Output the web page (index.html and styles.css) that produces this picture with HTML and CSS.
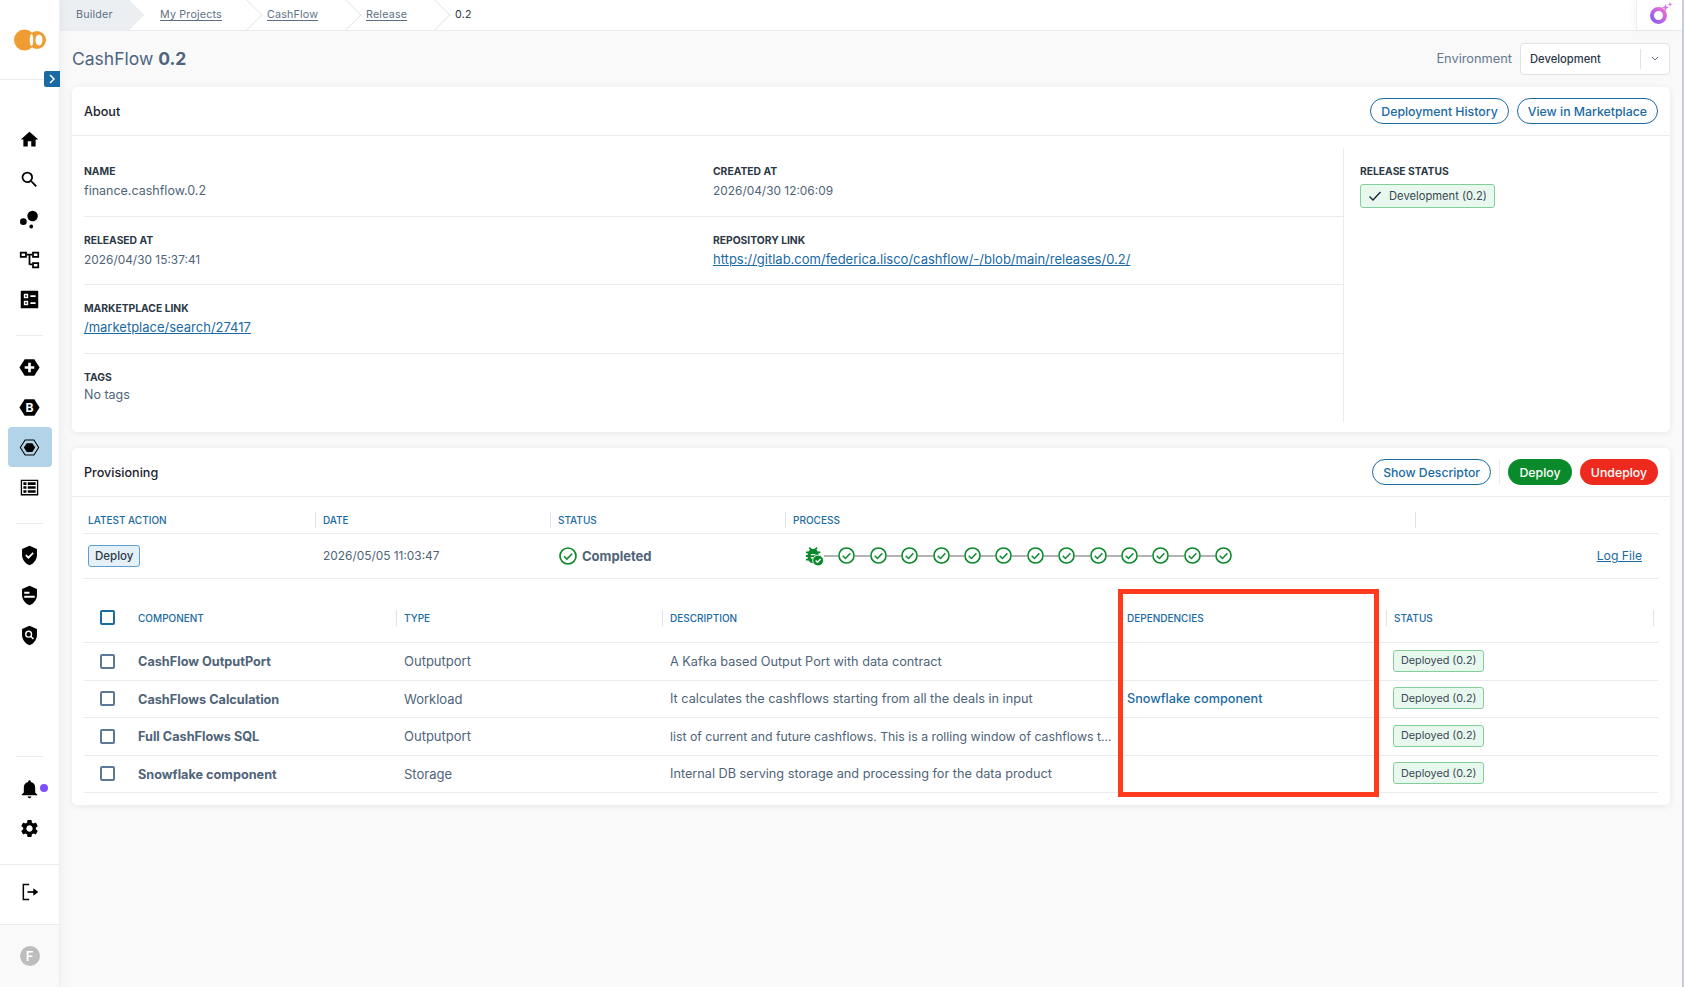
FILE: index.html
```html
<!DOCTYPE html>
<html lang="en">
<head>
    <meta charset="UTF-8">
    <meta name="viewport" content="width=device-width, initial-scale=1.0">
    <title>CashFlow 0.2</title>
    <link rel="stylesheet" href="styles.css">
</head>
<body>
    <svg class="sprites" width="0" height="0">
        <symbol id="check-circle" viewBox="0 0 18 18">
            <circle cx="9" cy="9" r="8" fill="#fff" stroke="#0a8a2a" stroke-width="1.7"/>
            <path d="M5 9.2l2.9 2.9 5.200-5.400" fill="none" stroke="#0a8a2a" stroke-width="1.6"/>
        </symbol>
    </svg>

    <aside class="sidebar">
        <div class="logo">
            <svg width="34" height="24" viewBox="0 0 34 24">
                <circle cx="11.5" cy="12" r="10.5" fill="#ef9d32"/>
                <circle cx="24" cy="12" r="9" fill="#ef9d32"/>
                <ellipse cx="26" cy="12" rx="3.5" ry="5.5" fill="#fff"/>
                <ellipse cx="18.5" cy="12" rx="1.8" ry="6" fill="#fff"/>
            </svg>
        </div>
        <button class="expand-tab">
            <svg width="8" height="12" viewBox="0 0 8 12"><path d="M2 2l4 4-4 4" fill="none" stroke="#fff" stroke-width="1.5"/></svg>
        </button>

        <nav class="nav-group first">
            <a class="nav-item"><svg viewBox="0 0 24 24"><path d="M10 20v-6h4v6h5v-8h3L12 3 2 12h3v8z"/></svg></a>
            <a class="nav-item"><svg viewBox="0 0 24 24"><path d="M15.500 14h-.79l-.28-.27A6.470 6.470 0 0 0 16 9.500 6.500 6.500 0 1 0 9.500 16c1.610 0 3.090-.59 4.230-1.570l.27.28v.79l5 4.990L20.490 19l-4.990-5zm-6 0C7.010 14 5 11.990 5 9.500S7.010 5 9.500 5 14 7.010 14 9.500 11.990 14 9.500 14z"/></svg></a>
            <a class="nav-item"><svg viewBox="0 0 24 24"><circle cx="15.5" cy="8" r="6"/><circle cx="5" cy="14.500" r="3.800"/><circle cx="14" cy="20" r="2.200"/></svg></a>
            <a class="nav-item"><svg viewBox="0 0 24 24"><path fill-rule="evenodd" d="M1 3h8v7H1zM3 5v3h4V5zM15 3h8v7h-8zm2 2v3h4V5zM15 15h8v7h-8zm2 2v3h4v-3z"/><path d="M9 5.500h6v2H9zM11 7h2v11h-2zM12 16.500h3v2h-3z"/></svg></a>
            <a class="nav-item"><svg viewBox="0 0 24 24"><path fill-rule="evenodd" d="M3 2h18a1 1 0 0 1 1 1v18a1 1 0 0 1-1 1H3a1 1 0 0 1-1-1V3a1 1 0 0 1 1-1zm2.500 3.500v5h5v-5zm1.600 1.600h1.800v1.800H7.100zM13 7v2h6V7zM5.500 13.500v5h5v-5zm1.600 1.600h1.800v1.800H7.100zM13 15v2h6v-2z"/></svg></a>
        </nav>
        <div class="nav-divider"></div>
        <nav class="nav-group">
            <a class="nav-item"><svg viewBox="0 0 24 24"><path d="M6.500 2.500h11L23.500 12l-6 9.500h-11L.5 12z"/><path d="M10.500 6.500h3v4h4v3h-4v4h-3v-4h-4v-3h4z" fill="#fff"/></svg></a>
            <a class="nav-item"><svg viewBox="0 0 24 24"><path d="M6.500 2.500h11L23.500 12l-6 9.500h-11L.5 12z"/><text x="12" y="17" class="hex-letter">B</text></svg></a>
            <a class="nav-item active"><svg viewBox="0 0 24 24"><path d="M7 3.500h10L22.500 12 17 20.500H7L1.500 12z" fill="none" stroke="#000" stroke-width="1.2"/><path d="M8.800 7h6.400l3.300 5-3.300 5H8.800l-3.300-5z"/></svg></a>
            <a class="nav-item"><svg viewBox="0 0 24 24"><path fill-rule="evenodd" d="M2 3h20v18H2zm1.500 1.500v15h17v-15z"/><path d="M5 6h3.500v3H5zM10 6h9v3h-9zM5 10.500h3.500v3H5zM10 10.500h9v3h-9zM5 15h3.500v3H5zM10 15h9v3h-9z"/></svg></a>
        </nav>
        <div class="nav-divider"></div>
        <nav class="nav-group">
            <a class="nav-item"><svg viewBox="0 0 24 24"><path d="M12 .8L3.500 4.500v7c0 5.200 3.600 10 8.500 11.700 4.900-1.700 8.500-6.500 8.500-11.700v-7z"/><path d="M7.800 11.500l3 3 5.400-5.400" fill="none" stroke="#fff" stroke-width="2"/></svg></a>
            <a class="nav-item"><svg viewBox="0 0 24 24"><path d="M12 .8L3.500 4.500v7c0 5.200 3.600 10 8.500 11.700 4.900-1.700 8.500-6.500 8.500-11.700v-7z"/><path d="M6 7.800h6v2.200H6zM6 12.300h12v2.200H6z" fill="#fff"/></svg></a>
            <a class="nav-item"><svg viewBox="0 0 24 24"><path d="M12 .8L3.500 4.500v7c0 5.200 3.600 10 8.500 11.700 4.900-1.700 8.500-6.500 8.500-11.700v-7z"/><circle cx="11" cy="10.500" r="3.300" fill="none" stroke="#fff" stroke-width="1.600"/><path d="M13.300 12.800l3.200 3.200" stroke="#fff" stroke-width="1.800"/></svg></a>
        </nav>

        <div class="nav-spacer"></div>

        <div class="nav-divider"></div>
        <nav class="nav-group">
            <a class="nav-item"><svg viewBox="0 0 24 24"><path d="M12 23c1.100 0 2-.9 2-2h-4c0 1.100.89 2 2 2zm6.500-6.500V11c0-3.070-1.640-5.640-5-6.320V4c0-.83-.67-1.500-1.500-1.500s-1.500.67-1.500 1.500v.68c-3.360.68-5 3.240-5 6.320v5.500L3 19v.8h18V19z"/></svg><span class="notify-dot"></span></a>
            <a class="nav-item"><svg viewBox="0 0 24 24"><path d="M19.140 12.940c.04-.3.06-.61.06-.94 0-.32-.02-.64-.07-.94l2.030-1.580c.18-.14.23-.41.12-.61l-1.920-3.320c-.12-.22-.37-.29-.59-.22l-2.390.96c-.5-.38-1.030-.7-1.620-.94l-.36-2.540c-.04-.24-.24-.41-.48-.41h-3.840c-.24 0-.43.17-.47.41l-.36 2.540c-.59.24-1.130.57-1.620.94l-2.390-.96c-.22-.08-.47 0-.59.22L2.740 8.870c-.12.21-.08.47.12.61l2.030 1.580c-.05.3-.09.63-.09.94s.02.64.07.94l-2.030 1.580c-.18.14-.23.41-.12.61l1.920 3.320c.12.22.37.29.59.22l2.390-.96c.5.38 1.030.7 1.620.94l.36 2.540c.05.24.24.41.48.41h3.840c.24 0 .44-.17.47-.41l.36-2.540c.59-.24 1.130-.56 1.620-.94l2.390.96c.22.08.47 0 .59-.22l1.920-3.320c.12-.22.07-.47-.12-.61l-2.010-1.580zM12 15.600c-1.980 0-3.600-1.620-3.600-3.600s1.620-3.600 3.600-3.600 3.600 1.620 3.600 3.600-1.620 3.600-3.600 3.600z"/></svg></a>
        </nav>
        <div class="logout">
            <svg width="20" height="20" viewBox="0 0 24 24"><path d="M11 3H4v18h7" fill="none" stroke="#000" stroke-width="1.800"/><path d="M9 11h9.500v2H9z"/><path d="M16 7.500l6 4.500-6 4.500z"/></svg>
        </div>
        <div class="user-block"><span class="avatar">F</span></div>
    </aside>

    <div class="page">
        <header class="topbar">
            <div class="crumbs">
                <span class="crumb crumb-root">Builder</span>
                <a class="crumb crumb-projects">My Projects</a>
                <a class="crumb crumb-cashflow">CashFlow</a>
                <a class="crumb crumb-release">Release</a>
                <span class="crumb crumb-current">0.2</span>
            </div>
            <div class="assistant">
                <svg width="28" height="28" viewBox="0 0 28 28">
                    <defs><linearGradient id="ai-grad" x1="0" y1="1" x2="1" y2="0"><stop offset="0" stop-color="#8a5cf0"/><stop offset="1" stop-color="#ef6fd0"/></linearGradient></defs>
                    <circle cx="12.5" cy="14.5" r="6.500" fill="none" stroke="url(#ai-grad)" stroke-width="4"/>
                    <path d="M19.500 3l1 2.500 2.500 1-2.500 1-1 2.500-1-2.500-2.500-1 2.500-1zM24 1l.6 1.800 1.800.6-1.800.6-.6 1.800-.6-1.800-1.800-.6 1.800-.6z" fill="#c77be8"/>
                </svg>
            </div>
        </header>

        <main class="content">
            <div class="title-row">
                <h1 class="page-title">CashFlow <b>0.2</b></h1>
                <div class="env-picker">
                    <span class="env-label">Environment</span>
                    <div class="env-select">
                        <span class="env-value">Development</span>
                        <span class="env-caret"><svg width="8" height="5" viewBox="0 0 8 5"><path d="M1 1l3 3 3-3" fill="none" stroke="#6b7a8c" stroke-width="1"/></svg></span>
                    </div>
                </div>
            </div>

            <section class="card about-card">
                <div class="card-header">
                    <h2>About</h2>
                    <div class="card-actions">
                        <button class="btn btn-outline">Deployment History</button>
                        <button class="btn btn-outline">View in Marketplace</button>
                    </div>
                </div>
                <div class="about-body">
                    <div class="about-fields">
                        <div class="field-row">
                            <div class="field"><div class="field-label">NAME</div><div class="field-value">finance.cashflow.0.2</div></div>
                            <div class="field"><div class="field-label">CREATED AT</div><div class="field-value date">2026/04/30 12:06:09</div></div>
                        </div>
                        <div class="field-row">
                            <div class="field"><div class="field-label">RELEASED AT</div><div class="field-value date">2026/04/30 15:37:41</div></div>
                            <div class="field"><div class="field-label">REPOSITORY LINK</div><a class="field-link">https://gitlab.com/federica.lisco/cashflow/-/blob/main/releases/0.2/</a></div>
                        </div>
                        <div class="field-row">
                            <div class="field"><div class="field-label">MARKETPLACE LINK</div><a class="field-link">/marketplace/search/27417</a></div>
                        </div>
                        <div class="field-row last">
                            <div class="field"><div class="field-label">TAGS</div><div class="field-value tight">No tags</div></div>
                        </div>
                    </div>
                    <div class="about-status">
                        <div class="field-label">RELEASE STATUS</div>
                        <div class="badge badge-large">
                            <svg width="14" height="12" viewBox="0 0 14 12"><path d="M1.500 6.500l3.500 3.500 7.500-8" fill="none" stroke="#1d2733" stroke-width="1.400"/></svg>
                            Development (0.2)
                        </div>
                    </div>
                </div>
            </section>

            <section class="card prov-card">
                <div class="card-header">
                    <h2>Provisioning</h2>
                    <div class="card-actions">
                        <button class="btn btn-outline btn-descriptor">Show Descriptor</button>
                        <span class="actions-sep"></span>
                        <button class="btn btn-deploy">Deploy</button>
                        <button class="btn btn-undeploy">Undeploy</button>
                    </div>
                </div>
                <div class="prov-body">
                    <table class="action-table">
                        <colgroup><col class="c-action"><col class="c-date"><col class="c-status"><col class="c-process"><col></colgroup>
                        <thead>
                            <tr>
                                <th class="no-sep"><span>LATEST ACTION</span></th>
                                <th><span>DATE</span></th>
                                <th><span>STATUS</span></th>
                                <th><span>PROCESS</span></th>
                                <th><span>&nbsp;</span></th>
                            </tr>
                        </thead>
                        <tbody>
                            <tr>
                                <td class="cell-action"><span class="action-tag">Deploy</span></td>
                                <td class="cell-date">2026/05/05 11:03:47</td>
                                <td class="cell-status">
                                    <div class="status-done">
                                        <svg width="18" height="18"><use href="#check-circle"/></svg>
                                        <span>Completed</span>
                                    </div>
                                </td>
                                <td class="cell-process">
                                    <div class="process">
                                        <svg class="bug" width="19" height="20" viewBox="3 2 21 22">
                                            <path d="M20 8h-2.810a5.985 5.985 0 0 0-1.820-1.960L17 4.410 15.590 3l-2.170 2.170a6.002 6.002 0 0 0-2.830 0L8.410 3 7 4.410l1.620 1.630C7.880 6.550 7.260 7.220 6.810 8H4v2h2.090c-.05.330-.09.660-.09 1v1H4v2h2v1c0 .340.040.670.09 1H4v2h2.810c1.040 1.790 2.970 3 5.190 3s4.150-1.210 5.190-3H20v-2h-2.090c.05-.330.09-.660.09-1v-1h2v-2h-2v-1c0-.340-.040-.670-.09-1H20V8z" fill="#0a8a2a"/>
                                            <path d="M9.500 11.500h5M9.500 15h3" stroke="#fff" stroke-width="1.600"/>
                                            <circle cx="17.500" cy="18" r="6" fill="#0a8a2a" stroke="#fff" stroke-width="1"/>
                                            <path d="M14.800 18l2 2 3.500-3.700" fill="none" stroke="#fff" stroke-width="1.500"/>
                                        </svg>
                                        <i></i><svg class="step"><use href="#check-circle"/></svg>
                                        <i></i><svg class="step"><use href="#check-circle"/></svg>
                                        <i></i><svg class="step"><use href="#check-circle"/></svg>
                                        <i></i><svg class="step"><use href="#check-circle"/></svg>
                                        <i></i><svg class="step"><use href="#check-circle"/></svg>
                                        <i></i><svg class="step"><use href="#check-circle"/></svg>
                                        <i></i><svg class="step"><use href="#check-circle"/></svg>
                                        <i></i><svg class="step"><use href="#check-circle"/></svg>
                                        <i></i><svg class="step"><use href="#check-circle"/></svg>
                                        <i></i><svg class="step"><use href="#check-circle"/></svg>
                                        <i></i><svg class="step"><use href="#check-circle"/></svg>
                                        <i></i><svg class="step"><use href="#check-circle"/></svg>
                                        <i></i><svg class="step"><use href="#check-circle"/></svg>
                                    </div>
                                </td>
                                <td class="cell-log"><a class="log-link">Log File</a></td>
                            </tr>
                        </tbody>
                    </table>

                    <div class="components">
                        <table class="comp-table">
                            <colgroup><col class="c-check"><col class="c-comp"><col class="c-type"><col class="c-desc"><col class="c-deps"><col></colgroup>
                            <thead>
                                <tr>
                                    <th class="no-sep cell-check"><span class="checkbox head"></span></th>
                                    <th class="no-sep cell-comp"><span>COMPONENT</span></th>
                                    <th><span>TYPE</span></th>
                                    <th><span>DESCRIPTION</span></th>
                                    <th><span>DEPENDENCIES</span></th>
                                    <th class="th-end"><span>STATUS</span></th>
                                </tr>
                            </thead>
                            <tbody>
                                <tr>
                                    <td class="cell-check"><span class="checkbox"></span></td>
                                    <td class="cell-comp"><b>CashFlow OutputPort</b></td>
                                    <td>Outputport</td>
                                    <td class="cell-desc">A Kafka based Output Port with data contract</td>
                                    <td></td>
                                    <td class="cell-state"><span class="badge">Deployed (0.2)</span></td>
                                </tr>
                                <tr>
                                    <td class="cell-check"><span class="checkbox"></span></td>
                                    <td class="cell-comp"><b>CashFlows Calculation</b></td>
                                    <td>Workload</td>
                                    <td class="cell-desc">It calculates the cashflows starting from all the deals in input</td>
                                    <td class="dep-link">Snowflake component</td>
                                    <td class="cell-state"><span class="badge">Deployed (0.2)</span></td>
                                </tr>
                                <tr>
                                    <td class="cell-check"><span class="checkbox"></span></td>
                                    <td class="cell-comp"><b>Full CashFlows SQL</b></td>
                                    <td>Outputport</td>
                                    <td class="cell-desc narrow">list of current and future cashflows. This is a rolling window of cashflows t...</td>
                                    <td></td>
                                    <td class="cell-state"><span class="badge">Deployed (0.2)</span></td>
                                </tr>
                                <tr>
                                    <td class="cell-check"><span class="checkbox"></span></td>
                                    <td class="cell-comp"><b>Snowflake component</b></td>
                                    <td>Storage</td>
                                    <td class="cell-desc">Internal DB serving storage and processing for the data product</td>
                                    <td></td>
                                    <td class="cell-state"><span class="badge">Deployed (0.2)</span></td>
                                </tr>
                            </tbody>
                        </table>
                        <div class="highlight-box"></div>
                    </div>
                </div>
            </section>
        </main>
    </div>
    <div class="scrollbar"></div>
</body>
</html>
```

FILE: styles.css
```css
:root {
    --blue: #1a6aa3;
    --text: #4f6479;
    --label: #2c3846;
    --border: #e9ebee;
    --green: #0a8a2a;
}

* {
    box-sizing: border-box;
    margin: 0;
    padding: 0;
}

body {
    display: flex;
    height: 987px;
    overflow: hidden;
    font-family: 'Inter', 'Open Sans', sans-serif;
    font-size: 13px;
    color: var(--text);
    background: #f9f9fa;
}

.sprites {
    position: absolute;
}

/* Sidebar */
.sidebar {
    position: relative;
    flex: 0 0 60px;
    display: flex;
    flex-direction: column;
    background: #fff;
    border-right: 1px solid #eceef0;
    box-shadow: 2px 0 10px rgba(0, 0, 0, 0.04);
    z-index: 1;
}

.logo {
    height: 80px;
    display: flex;
    align-items: center;
    justify-content: center;
    border-bottom: 1px solid var(--border);
}

.expand-tab {
    position: absolute;
    top: 71px;
    right: -1px;
    width: 16px;
    height: 16px;
    display: flex;
    align-items: center;
    justify-content: center;
    background: var(--blue);
    border: none;
    border-radius: 2px 0 0 2px;
}

.nav-group {
    display: flex;
    flex-direction: column;
    align-items: center;
}

.nav-group.first {
    margin-top: 39px;
}

.nav-item {
    position: relative;
    width: 44px;
    height: 40px;
    display: flex;
    align-items: center;
    justify-content: center;
    border-radius: 4px;
}

.nav-item svg {
    width: 21px;
    height: 21px;
}

.nav-item.active {
    background: #b3d4e8;
}

.hex-letter {
    font-family: 'Inter', sans-serif;
    font-size: 14px;
    font-weight: 700;
    fill: #fff;
    text-anchor: middle;
}

.notify-dot {
    position: absolute;
    top: 16px;
    right: 4px;
    width: 8px;
    height: 8px;
    border-radius: 50%;
    background: #7c4dff;
}

.nav-divider {
    width: 27px;
    height: 1px;
    margin: 16px auto 11px;
    background: var(--border);
}

.nav-spacer {
    flex: 1;
}

.logout {
    height: 60px;
    margin-top: 16px;
    padding-bottom: 5px;
    display: flex;
    align-items: center;
    justify-content: center;
    border-top: 1px solid var(--border);
}

.user-block {
    height: 63px;
    display: flex;
    align-items: center;
    justify-content: center;
    background: #f9f9fa;
    border-top: 1px solid var(--border);
}

.avatar {
    width: 20px;
    height: 20px;
    display: flex;
    align-items: center;
    justify-content: center;
    border-radius: 50%;
    background: #bdbdbd;
    color: #fff;
    font-size: 13px;
    font-weight: 600;
}

/* Top bar */
.page {
    flex: 1;
    min-width: 0;
    display: flex;
    flex-direction: column;
}

.topbar {
    height: 31px;
    display: flex;
    justify-content: space-between;
    background: #fff;
    border-bottom: 1px solid var(--border);
}

.crumbs {
    display: flex;
    height: 30px;
    overflow: hidden;
}

.crumb {
    position: relative;
    display: flex;
    align-items: center;
    padding-bottom: 1px;
    font-size: 10.7px;
    letter-spacing: 0.2px;
    color: #5d7186;
}

a.crumb {
    text-decoration: underline;
    text-underline-offset: 2px;
}

a.crumb::after,
.crumb-root::after {
    content: "";
    position: absolute;
    top: 50%;
    width: 21px;
    height: 21px;
    transform: translateY(-50%) rotate(45deg);
    border-top: 1px solid #e6e8eb;
    border-right: 1px solid #e6e8eb;
    background: #fff;
}

.crumb-root {
    width: 70px;
    padding-left: 16px;
    background: #eceff1;
}

.crumb-root::after {
    right: -10px;
    background: #eceff1;
    border: none;
}

.crumb-projects { margin-left: 30px; width: 107px; }
.crumb-cashflow { width: 99px; }
.crumb-release { width: 89px; }

.crumb-projects::after,
.crumb-cashflow::after,
.crumb-release::after {
    right: 9px;
}

.crumb-current {
    color: #2c3846;
}

.assistant {
    width: 46px;
    height: 30px;
    display: flex;
    align-items: center;
    justify-content: center;
    border-left: 1px solid #eceef0;
    box-shadow: -3px 0 6px rgba(0, 0, 0, 0.03);
}

/* Page content */
.content {
    padding: 0 12px;
}

.title-row {
    height: 56px;
    display: flex;
    align-items: center;
    justify-content: space-between;
    padding-bottom: 1px;
}

.page-title {
    font-size: 17.5px;
    font-weight: 400;
    color: #4d6580;
}

.page-title b {
    font-weight: 700;
}

.env-picker {
    display: flex;
    align-items: center;
    gap: 8px;
}

.env-label {
    font-size: 12.8px;
    color: #64788d;
}

.env-select {
    width: 150px;
    height: 32px;
    display: flex;
    align-items: center;
    justify-content: space-between;
    padding-left: 9px;
    background: #fff;
    border: 1px solid #dfe3e7;
    border-radius: 4px;
}

.env-value {
    font-size: 11.2px;
    font-weight: 500;
    color: #2c3846;
}

.env-caret {
    width: 29px;
    height: 20px;
    display: flex;
    align-items: center;
    justify-content: center;
    border-left: 1px solid #dfe3e7;
}

.card {
    background: #fff;
    border-radius: 5px;
    box-shadow: 0 1px 6px rgba(40, 50, 60, 0.09);
}

.about-card {
    height: 345px;
    margin-bottom: 16px;
}

.prov-card {
    height: 357px;
}

.card-header {
    height: 49px;
    display: flex;
    align-items: center;
    justify-content: space-between;
    padding: 0 12px;
    border-bottom: 1px solid var(--border);
}

.card-header h2 {
    font-size: 12.6px;
    font-weight: 500;
    color: #1a222c;
}

.card-actions {
    display: flex;
    align-items: center;
    gap: 8px;
}

.btn {
    height: 26px;
    padding: 0 10px;
    font-family: inherit;
    font-size: 12.3px;
    font-weight: 500;
    border-radius: 13px;
    border: 1px solid transparent;
    white-space: nowrap;
}

.btn-outline {
    background: #fff;
    border-color: var(--blue);
    color: var(--blue);
}

.btn-descriptor {
    font-size: 12.2px;
}

.btn-deploy {
    width: 64px;
    padding: 0;
    background: var(--green);
    color: #fff;
}

.btn-undeploy {
    width: 78px;
    padding: 0;
    background: #ee2a1e;
    color: #fff;
}

.actions-sep {
    width: 1px;
    height: 24px;
    background: var(--border);
}

/* About */
.about-body {
    display: flex;
    padding: 12px 0 0 12px;
}

.about-fields {
    flex: 0 0 1260px;
    border-right: 1px solid var(--border);
}

.field-row {
    height: 68.5px;
    display: grid;
    grid-template-columns: 629px 1fr;
    padding-top: 15px;
    border-bottom: 1px solid var(--border);
}

.field-row.last {
    border-bottom: none;
}

.field-label {
    font-size: 10.3px;
    font-weight: 700;
    line-height: 16px;
    color: var(--label);
}

.field-value {
    margin-top: 2px;
    font-size: 12.5px;
    line-height: 20px;
    color: var(--text);
}

.field-value.date {
    font-size: 11.9px;
}

.field-value.tight {
    margin-top: 0;
}

.field-link {
    display: inline-block;
    margin-top: 1px;
    font-size: 13px;
    line-height: 20px;
    color: var(--blue);
    text-decoration: underline;
}

.about-status {
    padding: 15px 0 0 16px;
}

.badge {
    display: inline-flex;
    align-items: center;
    height: 22px;
    padding: 0 7px;
    font-size: 10.8px;
    color: #3a4754;
    background: #e8f8ee;
    border: 1px solid #84cf99;
    border-radius: 3px;
    white-space: nowrap;
}

.badge-large {
    margin-top: 5px;
    height: 24px;
    gap: 7px;
    padding: 0 7px;
    font-size: 11.2px;
}

/* Provisioning */
.prov-body {
    padding: 0 12px;
}

.prov-body table {
    width: 100%;
    table-layout: fixed;
    border-collapse: collapse;
}

.c-action { width: 231px; }
.c-date { width: 235px; }
.c-status { width: 235px; }
.c-process { width: 630px; }

.c-check { width: 54px; }
.c-comp { width: 258px; }
.c-type { width: 266px; }
.c-desc { width: 457px; }
.c-deps { width: 267px; }

th {
    text-align: left;
    font-weight: 500;
    font-size: 10px;
    color: var(--blue);
}

th span {
    display: block;
    padding-left: 7px;
    line-height: 16px;
    border-left: 1px solid #dfe3e7;
}

th.no-sep span {
    border-left: none;
    padding-left: 4px;
}

.action-table th {
    height: 36px;
    padding-top: 10px;
    border-bottom: 1px solid var(--border);
}

.action-table td {
    height: 45px;
    border-bottom: 1px solid var(--border);
    vertical-align: middle;
}

.cell-action {
    padding-left: 4px;
}

.action-tag {
    display: inline-flex;
    align-items: center;
    height: 22px;
    padding: 0 6px;
    font-size: 11.5px;
    font-weight: 500;
    color: #2c3846;
    background: #e6f0f8;
    border: 1px solid #5f9fd0;
    border-radius: 3px;
}

.cell-date {
    padding-left: 8px;
    font-size: 11.9px;
}

.cell-status {
    padding-left: 9px;
}

.status-done {
    display: flex;
    align-items: center;
    gap: 5px;
    font-weight: 700;
}

.cell-process {
    padding-left: 20px;
}

.process {
    width: 427px;
    display: flex;
    align-items: center;
}

.process i {
    flex: 1;
    height: 2px;
    background: #b3b3b3;
}

.process svg {
    flex: none;
}

.step {
    width: 17px;
    height: 17px;
}

.cell-log {
    padding-right: 16px;
    text-align: right;
    font-size: 12.2px;
}

.log-link {
    color: var(--blue);
    text-decoration: underline;
}

.components {
    position: relative;
}

.comp-table th {
    height: 64px;
    padding-top: 15px;
    border-bottom: 1px solid var(--border);
}

.comp-table td {
    height: 37.5px;
    padding-left: 8px;
    border-bottom: 1px solid var(--border);
    white-space: nowrap;
    vertical-align: middle;
}

.comp-table .cell-check {
    padding-left: 16px;
}

.comp-table th.cell-comp span {
    padding-left: 0;
}

.comp-table th.th-end span {
    margin-right: 4px;
    border-right: 1px solid #dfe3e7;
}

.comp-table td.cell-comp {
    padding-left: 0;
}

.comp-table th.cell-check {
    padding-left: 16px;
}

.comp-table td.cell-state {
    padding-left: 7px;
    padding-bottom: 1px;
}

.cell-desc {
    font-size: 12.7px;
}

.cell-desc.narrow {
    font-size: 12.3px;
}

.checkbox {
    display: block;
    width: 15px;
    height: 15px;
    border: 2px solid #5b7894;
    border-radius: 2px;
    background: #fff;
}

th.no-sep .checkbox.head {
    padding: 0;
    border: 2px solid var(--blue);
}

.cell-comp b {
    font-size: 12.7px;
    font-weight: 700;
    color: var(--text);
}

.dep-link {
    color: var(--blue);
    font-size: 12.7px;
    font-weight: 500;
}

.highlight-box {
    position: absolute;
    left: 1034px;
    top: 10.5px;
    width: 261px;
    height: 207.5px;
    border: 5px solid #ff3b1f;
    pointer-events: none;
}

.scrollbar {
    flex: 0 0 2px;
    background: #c5cce0;
}
```
